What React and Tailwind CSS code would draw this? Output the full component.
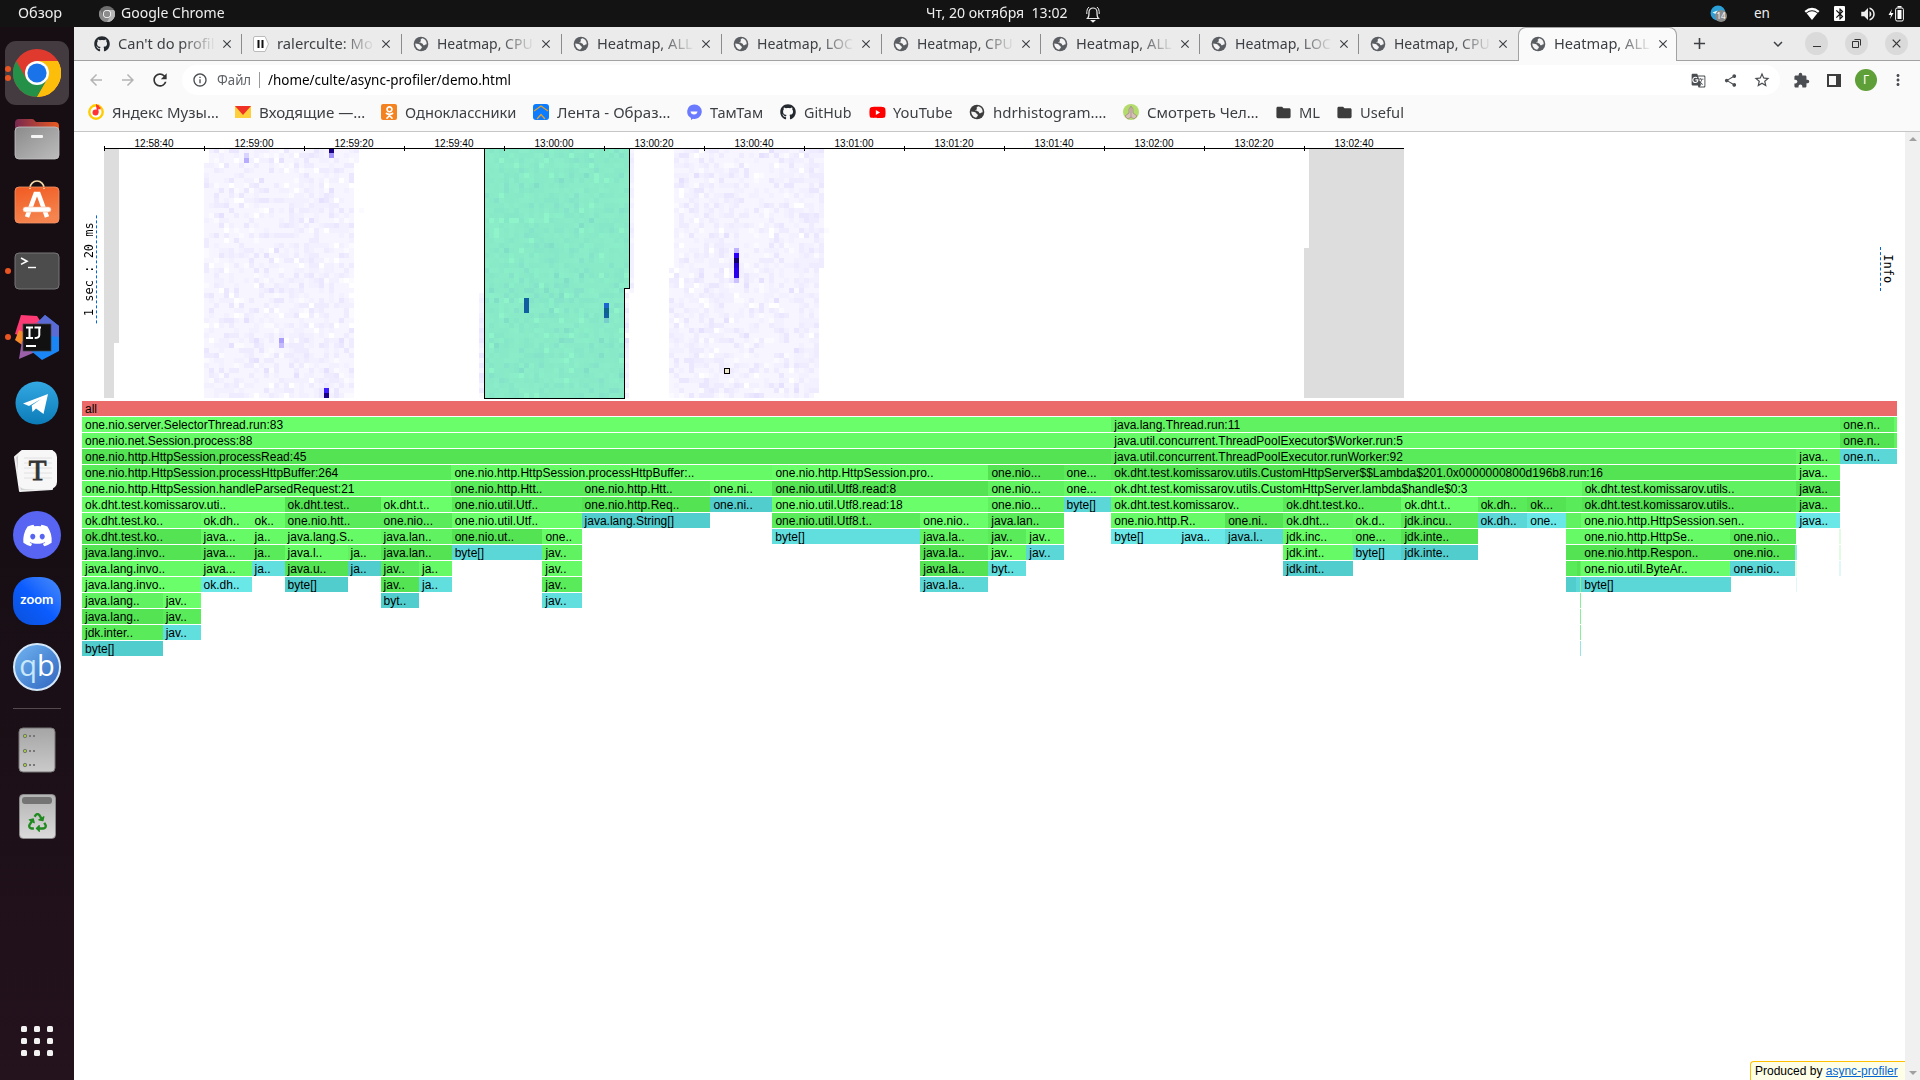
import { FaGithub, FaDiscord, FaYoutube, FaOdnoklassniki, FaRecycle } from "react-icons/fa";
import {
  MdClose, MdArrowBack, MdArrowForward, MdRefresh, MdInfoOutline, MdGTranslate, MdShare, MdStarBorder,
  MdExtension, MdMoreVert, MdFolder, MdAdd, MdKeyboardArrowDown, MdBluetooth, MdVolumeUp,
} from "react-icons/md";

const UBU = "font-['Noto_Sans','DejaVu_Sans',sans-serif]";

/* Text stretched horizontally to a given pixel width. */
function Fit({ w, children, className = "" }) {
  const ref = (el) => {
    if (!el) return;
    const fit = () => {
      el.style.transform = "none";
      const n = el.offsetWidth;
      if (n) el.style.transform = `scaleX(${w / n})`;
    };
    fit();
    if (document.fonts) document.fonts.ready.then(fit);
  };
  return (
    <span className={`block shrink-0 whitespace-pre ${className}`} style={{ width: w }}>
      <span ref={ref} className="inline-block origin-left">{children}</span>
    </span>
  );
}

function Globe({ color }) {
  return (
    <svg width="16" height="16" viewBox="0 0 16 16" className="shrink-0">
      <circle cx="8" cy="8" r="7.300" fill={color} />
      <path d="M9.300 2.300C8 2.700 7.300 3.600 7.800 4.600 8.500 5.800 6.800 5.600 6.500 6.500 6.300 7.200 8.800 7 9.600 7.700 10.400 8.500 9.800 9.300 10.800 9.300 12 9.300 12 8.200 13.700 8.200 13.800 5.200 12 3 9.300 2.300Z" fill="#f4f4f4" />
      <path d="M2.300 7.500C2.200 10.600 4.300 13.300 7.300 13.700 7.400 12.600 8.900 12.300 8.900 11.200 8.900 10.100 7.600 10.400 7.300 9.300 7 8.100 4.300 7.600 2.300 7.500Z" fill="#f4f4f4" />
    </svg>
  );
}

function ChromeLogo({ size, gray }) {
  const c = gray ? ["#6f6f6f", "#b5b5b5", "#8a8a8a", "#8c8c8c"] : ["#e03a2f", "#fdbd0b", "#249048", "#1a73e8"];
  return (
    <svg width={size} height={size} viewBox="0 0 48 48">
      <circle cx="24" cy="24" r="24" fill={c[0]} />
      <path d="M24 12H44.8A24 24 0 0 1 24 48L34.4 30Z" fill={c[1]} />
      <path d="M3.2 12A24 24 0 0 0 24 48L34.4 30H24L13.6 30Z" fill={c[2]} />
      <path d="M34.4 30L24 48A24 24 0 0 0 44.8 12H24Z" fill={c[1]} />
      <circle cx="24" cy="24" r="12" fill="#fff" />
      <circle cx="24" cy="24" r="9.6" fill={c[3]} />
    </svg>
  );
}

function TopBar() {
  return (
    <header className={`flex h-[27px] items-center bg-[#131313] text-[13.5px] text-[#eeeeee] ${UBU}`}>
      <Fit w={44} className="ml-[18px]">Обзор</Fit>
      <div className="ml-[37px] mr-[6px]"><ChromeLogo size={16} gray /></div>
      <Fit w={104}>Google Chrome</Fit>
      <Fit w={142} className="ml-[701px]">Чт, 20 октября  13:02</Fit>
      <svg className="ml-[17px]" width="16" height="18" viewBox="0 0 16 18" fill="none" stroke="#eee" strokeWidth="1.2">
        <path d="M2.5 13.5C4.2 12 4 9.5 4 7a4 4 0 0 1 8 0c0 2.500-.2 5 1.500 6.500Z" />
        <path d="M6.500 15.500h3L8 17Z" fill="#eee" />
        <path d="M1.800 9V6.500Q2 3.500 4 2M14.200 9V6.500Q14 3.500 12 2" strokeWidth="1" />
      </svg>
      <svg className="ml-[609px]" width="18" height="18" viewBox="0 0 18 18">
        <circle cx="8" cy="8" r="7.500" fill="#2a9fd8" />
        <path d="M2.500 7.500l5-2-1 4Z" fill="#dff" />
        <circle cx="11" cy="11" r="6" fill="#8a8a8a" />
        <text x="11" y="14" fontSize="8" fill="#fff" textAnchor="middle" fontFamily="Noto Sans">14</text>
      </svg>
      <Fit w={16} className="ml-[26px]">en</Fit>
      <svg className="ml-[34px]" width="16" height="14" viewBox="0 0 16 14">
        <path d="M.5 4Q8-2.500 15.500 4L14 5.700Q8 1 2 5.700Z" fill="#fff" />
        <path d="M2.600 6.200Q8 2.200 13.400 6.200L8 13Z" fill="#fff" />
      </svg>
      <div className="ml-[14px] flex h-[15px] w-[11px] items-center justify-center rounded-[1px] bg-white text-[#131313]">
        <MdBluetooth size={14} className="shrink-0" />
      </div>
      <MdVolumeUp size={18} className="ml-[14px]" />
      <svg className="ml-[11px]" width="17" height="16" viewBox="0 0 17 16">
        <path d="M4 3L.5 9H3L2 13 5.500 7H3Z" fill="#fff" />
        <rect x="7.600" y="2" width="7.800" height="13" rx="1.500" fill="none" stroke="#fff" />
        <rect x="9.500" y="4" width="4" height="9" fill="#fff" />
        <rect x="9.500" y="0" width="4" height="1.500" fill="#fff" />
      </svg>
    </header>
  );
}

function DockItem({ children, h, dots = 0 }) {
  return (
    <div className="flex w-[74px] shrink-0 items-center" style={{ height: h }}>
      <div className="flex w-[11px] flex-col items-end gap-[3px]">
        {Array.from({ length: dots }, (_, i) => <i key={i} className="block size-[6px] rounded-full bg-[#e95420]" />)}
      </div>
      <div className="flex w-[52px] items-center justify-center">{children}</div>
    </div>
  );
}

function Dock() {
  return (
    <aside className="flex w-[74px] shrink-0 flex-col bg-linear-to-b from-[#170e14] from-50% to-[#24121d]">
      <div className="mt-[14px] ml-[5px] flex h-[64px] w-[64px] shrink-0 items-center rounded-[11px] bg-[#443b41]">
        <div className="flex w-[6px] flex-col items-end gap-[3px]">
          <i className="block size-[6px] rounded-full bg-[#e95420]" />
          <i className="block size-[6px] rounded-full bg-[#e95420]" />
        </div>
        <div className="ml-[2px]"><ChromeLogo size={48} /></div>
      </div>
      <DockItem h={68}>
        <svg width="46" height="42" viewBox="0 0 46 42">
          <defs>
            <linearGradient id="fo"><stop offset="0" stopColor="#77284f" /><stop offset="1" stopColor="#e95a20" /></linearGradient>
            <linearGradient id="fg" x2="1" y2="1"><stop offset="0" stopColor="#8b8b8b" /><stop offset="1" stopColor="#bcbcbc" /></linearGradient>
          </defs>
          <path d="M1 5q0-4 4-4h13q2 0 3 2l1 1h19q4 0 4 4v12H1Z" fill="url(#fo)" />
          <rect x="1" y="9" width="44" height="32" rx="4" fill="url(#fg)" stroke="#c5c5c5" strokeWidth=".8" />
          <rect x="17" y="17" width="12" height="3" rx="1" fill="#f5f5f5" />
        </svg>
      </DockItem>
      <DockItem h={58}>
        <svg width="46" height="44" viewBox="0 0 46 44">
          <defs><linearGradient id="st" x2=".3" y2="1"><stop offset="0" stopColor="#f15a22" /><stop offset="1" stopColor="#f5844e" /></linearGradient></defs>
          <path d="M16 10V8a7 7 0 0 1 14 0v2" fill="none" stroke="#f5d9a8" strokeWidth="1.700" />
          <rect x="1" y="7" width="44" height="36" rx="4" fill="url(#st)" stroke="#f49468" strokeWidth=".8" />
          <path d="M13 37L21.500 14h3L33 37" fill="none" stroke="#fff" strokeWidth="4.500" />
          <rect x="9" y="27" width="28" height="5" rx="2.500" fill="#fff" stroke="#f7b08c" strokeWidth=".6" />
          <path d="M16 9V8M30 9V8" stroke="#f5d9a8" strokeWidth="1.700" />
        </svg>
      </DockItem>
      <DockItem h={80} dots={1}>
        <svg width="46" height="38" viewBox="0 0 46 38">
          <rect x="1" y="1" width="44" height="36" rx="4" fill="#4c4c4c" stroke="#777" />
          <path d="M7 6l6 3.200-6 3.200" fill="none" stroke="#fff" strokeWidth="1.600" />
          <path d="M14 15.500h8" stroke="#fff" strokeWidth="1.400" />
        </svg>
      </DockItem>
      <DockItem h={52} dots={1}>
        <svg width="46" height="46" viewBox="0 0 46 46">
          <path d="M7 1l16 1 6 9-12 14L1 20Z" fill="#fd3a73" />
          <path d="M5 16l13 6-4 13L1 26Z" fill="#f68b2c" />
          <path d="M8 27l18 9-21 9Z" fill="#9a5fa8" />
          <path d="M31 1l14 11v25L28 46 17 37l2-24Z" fill="#1a86f5" />
          <path d="M31 1l14 11v11L20 20l-1-7Z" fill="#5b6bd6" />
          <path d="M20 8l10 3v8H16Z" fill="#e0417f" />
          <rect x="9" y="10" width="28" height="27" fill="#111" stroke="#444" strokeWidth=".7" />
          <path d="M12 13.500h7M12 24h7M15.500 13.500V24M20.500 13.500h6.500M25.300 13.500V21q0 3-4.600 3" fill="none" stroke="#fff" strokeWidth="2" />
          <rect x="12" y="31" width="10" height="2" fill="#fff" />
        </svg>
      </DockItem>
      <DockItem h={80}>
        <svg width="44" height="44" viewBox="0 0 44 44">
          <defs><linearGradient id="tg" x2="0" y2="1"><stop offset="0" stopColor="#33a8e2" /><stop offset="1" stopColor="#0c7cb8" /></linearGradient></defs>
          <circle cx="22" cy="22" r="21.500" fill="url(#tg)" />
          <path d="M8 22.500L33 13l-4.500 20-7.500-5.500-3.500 3.500-.8-6.500L26 18 14 25Z" fill="#fff" />
        </svg>
      </DockItem>
      <DockItem h={54}>
        <svg width="44" height="43" viewBox="0 0 44 43" className="-translate-x-px">
          <path d="M1 8L8 2h30v38L6 42Z" fill="#cfcfcf" stroke="#eee" strokeLinejoin="round" strokeWidth="2" />
          <rect x="4" y="1" width="39" height="39" rx="7" fill="#f7f7f7" />
          <path d="M10 9h28M10 14h28M10 19h28M10 24h28M10 29h28" stroke="#e0e0e0" />
          <text x="23.500" y="31" fontSize="29" textAnchor="middle" fontFamily="Liberation Serif" fill="#333" stroke="#333" strokeWidth=".9">T</text>
        </svg>
      </DockItem>
      <DockItem h={76}>
        <div className="flex size-[48px] items-center justify-center rounded-full bg-[#5765f2] text-white"><FaDiscord size={31} /></div>
      </DockItem>
      <DockItem h={56}>
        <div className="flex size-[48px] items-center justify-center rounded-[20px] bg-linear-to-tr from-[#0b50d8] via-[#0b5cff] to-[#4a8cf8] font-['Lato',sans-serif] text-[13px] font-bold text-white">
          <span className="inline-block -translate-y-px scale-x-[1.04]">zoom</span>
        </div>
      </DockItem>
      <DockItem h={76}>
        <div className="flex size-[48px] items-center justify-center rounded-full border-2 border-[#d5e8fa] bg-linear-to-br from-[#72b4f0] to-[#3066c0] font-['Open_Sans',sans-serif] text-[29px] leading-none">
          <span className="-mt-[5px] text-[#c8e8fa]">q</span><span className="-mt-[5px] text-white">b</span>
        </div>
      </DockItem>
      <div className="mt-[3px] ml-[13px] h-px w-[48px] shrink-0 bg-[#544b50]" />
      <div className="h-[8px] shrink-0" />
      <DockItem h={66}>
        <svg width="38" height="46" viewBox="0 0 38 46">
          <defs><linearGradient id="dk" x2="0" y2="1"><stop offset="0" stopColor="#a5a5a5" /><stop offset="1" stopColor="#cacaca" /></linearGradient></defs>
          <rect x="1" y="1" width="36" height="44" rx="4" fill="url(#dk)" stroke="#777" />
          {[9, 24, 38].map((y) => (
            <g key={y}>
              <circle cx="7" cy={y} r="1.700" fill="#a0c84a" stroke="#666" strokeWidth=".8" />
              <rect x="11" y={y - 1} width="2" height="2" fill="#777" /><rect x="15" y={y - 1} width="2" height="2" fill="#777" />
            </g>
          ))}
        </svg>
      </DockItem>
      <DockItem h={66}>
        <div className="flex h-[45px] w-[37px] flex-col items-center rounded-[4px] border border-[#888] bg-linear-to-b from-[#b4b4b4] to-[#dadada] pt-[2px] text-[#208a20]">
          <div className="mb-[9px] h-[7px] w-[30px] rounded-[3px] bg-[#747474]" />
          <FaRecycle size={19} />
        </div>
      </DockItem>
      <div className="grow" />
      <div className="mb-[24px] ml-[21px] grid w-[33px] grid-cols-3 gap-x-[6px] gap-y-[6px]">
        {Array.from({ length: 9 }, (_, i) => <i key={i} className="block size-[6px] rounded-[1.5px] bg-[#f2f2f2]" />)}
      </div>
    </aside>
  );
}

const TABS = [
  ["Can't do profil", "gh", 159], ["ralerculte: Mo", "mp", 160], ["Heatmap, CPU", "g", 160], ["Heatmap, ALL", "g", 160], ["Heatmap, LOC", "g", 160],
  ["Heatmap, CPU", "g", 159], ["Heatmap, ALL", "g", 159], ["Heatmap, LOC", "g", 159], ["Heatmap, CPU", "g", 159], ["Heatmap, ALL", "g", 159],
];

function Tab({ title, icon, w, last, beforeLast }) {
  return (
    <div
      className={`flex shrink-0 items-center ${last ? "h-[34px] rounded-t-[8px] border border-b-0 border-[#a2a2a2] bg-[#fafafa] pb-[2px]" : "h-[33px]"}`}
      style={{ width: w }}
    >
      <div className={`flex w-[16px] justify-center text-[#5a5e63] ${last ? "ml-[11px]" : "ml-[11px]"}`}>
        {icon === "gh" && <FaGithub size={16} color="#24292f" />}
        {icon === "g" && <Globe color="#5a5e63" />}
        {icon === "mp" && (
          <svg width="16" height="16" viewBox="0 0 16 16">
            <path d="M2 .5h10l3.500 7.500-3.500 7.500H2Q.5 15.500.5 14V2Q.5.500 2 .5Z" fill="#fff" stroke="#bbb" />
            <path d="M5.500 4v8M9.500 4v8" stroke="#111" strokeWidth="2" />
          </svg>
        )}
      </div>
      <div className="ml-[8px] w-[98px] shrink-0 text-[14px] whitespace-nowrap text-[#3c3f43] mask-r-from-64% mask-r-to-100%">
        <Fit w={96}>{title}</Fit>
      </div>
      <MdClose size={14} className="ml-[4px] shrink-0 text-[#3c3f43]" />
      <div className="grow" />
      {!last && !beforeLast && <div className="h-[20px] w-px bg-[#8c8c8c]" />}
    </div>
  );
}

function TabStrip() {
  return (
    <div className="flex h-[34px] items-start border-b border-[#a2a2a2] bg-[#ebebeb] pl-[9px]">
      {TABS.map(([t, i, w], k) => <Tab key={k} title={t} icon={i} w={w} last={k === 9} beforeLast={k === 8} />)}
      <div className="flex h-[33px] grow items-center text-[#3c3f43]">
        <MdAdd size={19} className="ml-[13px]" />
        <MdKeyboardArrowDown size={18} className="ml-[60px]" />
        <div className="ml-[18px] flex size-[23px] items-end justify-center rounded-full bg-[#dadada] pb-[8px]"><i className="block h-px w-[8px] bg-[#333]" /></div>
        <div className="ml-[17px] flex size-[23px] items-center justify-center rounded-full bg-[#dadada]">
          <svg width="9" height="9" viewBox="0 0 9 9" fill="none" stroke="#333"><path d="M.5 2.500h6v6h-6ZM2.500.5h6v6" /></svg>
        </div>
        <div className="ml-[17px] flex size-[23px] items-center justify-center rounded-full bg-[#dadada]">
          <svg width="9" height="9" viewBox="0 0 9 9" fill="none" stroke="#333" strokeWidth="1.200"><path d="M.7.700l7.600 7.600M8.300.7L.7 8.300" /></svg>
        </div>
      </div>
    </div>
  );
}

function Toolbar() {
  return (
    <div className="flex h-[38px] items-center bg-[#fafafa] text-[14px] text-[#4a4d51]">
      <MdArrowBack size={18} className="ml-[13px] text-[#b4b4b4]" />
      <MdArrowForward size={18} className="ml-[14px] text-[#b4b4b4]" />
      <MdRefresh size={20} className="ml-[13px] text-[#333]" />
      <div className="ml-[12px] flex h-[30px] w-[1598px] items-center rounded-full bg-white pl-[10px]">
        <MdInfoOutline size={16} />
        <Fit w={34} className="ml-[9px] -translate-y-px text-[#5f6368]">Файл</Fit>
        <div className="mx-[8px] h-[16px] w-px bg-[#9a9a9a]" />
        <Fit w={243} className="-translate-y-px text-black">/home/culte/async-profiler/demo.html</Fit>
        <div className="grow" />
        <MdGTranslate size={15} />
        <MdShare size={15} className="ml-[17px]" />
        <MdStarBorder size={18} className="ml-[15px] mr-[9px]" />
      </div>
      <MdExtension size={17} className="ml-[13px]" />
      <div className="ml-[17px] h-[13px] w-[14px] border-2 border-r-[5px] border-[#3d3d3d]" />
      <div className="ml-[14px] flex size-[22px] items-center justify-center rounded-full bg-[#5f9f37] text-[12px] text-white">Г</div>
      <MdMoreVert size={18} className="ml-[12px]" />
    </div>
  );
}

const MARKS = [
  ["ym", "Яндекс Музы…", 107, 0], ["mail", "Входящие —…", 106, 16], ["ok", "Одноклассники", 111, 16], ["lenta", "Лента - Образ…", 113, 17],
  ["tt", "ТамТам", 53, 16], ["gh", "GitHub", 48, 17], ["yt", "YouTube", 60, 17], ["g", "hdrhistogram.…", 113, 16], ["sm", "Смотреть Чел…", 112, 17],
  ["f", "ML", 21, 16], ["f", "Useful", 44, 16],
];

function MarkIcon({ k }) {
  if (k === "gh") return <FaGithub size={16} color="#24292f" />;
  if (k === "yt") return <FaYoutube size={17} color="#f00" className="shrink-0" />;
  if (k === "g") return <Globe color="#3c3c3c" />;
  if (k === "f") return <MdFolder size={17} color="#3c3c3c" className="shrink-0" />;
  if (k === "ok")
    return <div className="flex size-[16px] items-center justify-center rounded-[2px] bg-[#f58220]"><FaOdnoklassniki size={13} color="#fff" /></div>;
  return (
    <svg width="16" height="16" viewBox="0 0 16 16">
      {k === "ym" && (<>
        <circle cx="8" cy="8" r="6.700" fill="#fff" stroke="#fc0" strokeWidth="2.400" />
        <path d="M8 1.500Q8 5 12.500 5.500V3.500L8 0Z" fill="#ff3b30" /><circle cx="7.500" cy="8.500" r="3" fill="#f33" />
        <path d="M9.500 8.500V1" stroke="#f33" strokeWidth="2" />
      </>)}
      {k === "mail" && (<><path d="M0 2h16v12H0Z" fill="#fdd03b" /><path d="M0 2h16L8 11Z" fill="#f03226" /></>)}
      {k === "lenta" && (<>
        <rect width="16" height="16" rx="3" fill="#0a7cff" />
        <path d="M1 7l7-5 7 5M4 15l4-4.500 4 4.500" fill="none" stroke="#e0a030" strokeWidth="1.300" />
      </>)}
      {k === "tt" && (<>
        <path d="M8 .5a7.200 7.200 0 1 1-1 14.200L5 16v-2A7.200 7.200 0 0 1 8 .5Z" fill="#6b7bff" />
        <path d="M4.500 7.500h7Q11 10.500 8 10.500T4.500 7.500Z" fill="#fff" />
      </>)}
      {k === "sm" && (<>
        <circle cx="8" cy="8" r="8" fill="#b4dc6c" />
        <path d="M8 2l2 3v4l4 3-3 3-3-2-3 2-3-3 4-3V5Z" fill="#d8c0b8" stroke="#907a80" strokeWidth=".6" />
        <path d="M8 3v10" stroke="#907a80" strokeWidth=".6" />
      </>)}
    </svg>
  );
}

function Bookmarks() {
  return (
    <div className="flex h-[33px] items-center border-b border-[#c6c6c6] bg-[#fafafa] pb-[6px] pl-[14px] text-[14px] text-[#3c3f43]">
      {MARKS.map(([k, t, w, ml], i) => (
        <div key={i} className="flex shrink-0 items-center" style={{ marginLeft: ml }}>
          <div className="mr-[8px] flex w-[16px] justify-center"><MarkIcon k={k} /></div>
          <Fit w={w}>{t}</Fit>
        </div>
      ))}
    </div>
  );
}

/* ---- heatmap ---- */
function rng(seed) {
  let s = seed;
  return () => {
    s = (s * 1664525 + 1013904223) >>> 0;
    return s / 4294967296;
  };
}
const LAV = ["#ffffff", "#fbfaff", "#f7f5ff", "#f7f5ff", "#f7f5ff", "#f3f0ff", "#f3f0ff", "#efecff", "#ebe7ff", "#e6e1ff"];
const GRN = ["#90f4cb", "#8aeec8", "#8aecc8", "#8aebc8", "#89eac8", "#88e9c8", "#88e9c8", "#86e6c8", "#84e3c8", "#80dfc6"];
function shade(r, bias) {
  const v = r();
  const n = v < 0.04 ? 0 : v < 0.1 ? 1 : v > 0.985 ? 9 : v > 0.92 ? 8 : v > 0.83 ? 7 : 2 + Math.floor(r() * 4);
  return Math.min(9, Math.max(0, n + (n > 0 && n < 7 && r() < bias ? 2 : 0)));
}
function cells(seed, startOf, palette, cols, biasOf) {
  const r = rng(seed);
  const out = [];
  for (let row = 0; row < 50; row++)
    for (let c = 0; c < cols(row); c++) out.push([startOf(row) + c * 5, row * 5, palette[shade(r, biasOf(c))]]);
  return out;
}
const CELLS = [
  ...cells(7, (r) => (r < 3 ? 105 : 100), LAV, () => 30, (c) => (c > 16 && c < 26 ? 0.6 : 0.1)),
  ...cells(21, (r) => (r < 29 ? 525 : 520), LAV, () => 1, () => 0.6),
  ...cells(22, (r) => (r < 29 ? 385 : 375), LAV, () => 1, () => 0.6),
  ...cells(33, () => 380, GRN, (r) => (r < 28 ? 29 : 28), () => 0.15),
  ...cells(44, (r) => (r < 24 ? 570 : 565), LAV, () => 30, (c) => (c > 24 ? 0.9 : c < 13 ? 0.45 : 0)),
  [225, 0, "#1a0087"], [225, 5, "#9f92fb"], [140, 5, "#d8d3ff"], [140, 10, "#b6adff"], [175, 190, "#ac9ffb"], [175, 195, "#c4bbff"],
  [220, 240, "#3a1cff"], [220, 245, "#1a0087"], [255, 60, "#fbfaff"], [720, 80, "#fbfaff"],
  [420, 150, "#115fa0"], [420, 155, "#115fa0"], [420, 160, "#115fa0"],
  [500, 155, "#1b66d0"], [500, 160, "#0e6290"], [500, 165, "#115fa0"], [500, 170, "#78cdcd"],
  [630, 100, "#beb4ff"], [630, 105, "#2a00ff"], [630, 110, "#14006e"], [630, 115, "#2000d4"], [630, 120, "#2800ee"], [630, 125, "#2800ee"], [630, 130, "#cac2ff"],
];

function Heatmap() {
  return (
    <div className="flex h-[269px] items-start">
      <div className="mt-[81px] ml-[8px] flex h-[112px] w-[15px] items-center justify-center">
        <span className="inline-block rotate-180 border-l border-dashed border-[#0366d6] font-['DejaVu_Sans_Mono',monospace] text-[12px] leading-[14px] whitespace-pre [writing-mode:vertical-rl]"> 1 sec : 20 ms </span>
      </div>
      <div className="ml-[7px] w-[1300px] font-['Liberation_Sans',Arial,sans-serif]">
        <div className="flex h-[16px] text-[10px] leading-[11px] text-black">
          {["12:58:40", "12:59:00", "12:59:20", "12:59:40", "13:00:00", "13:00:20", "13:00:40", "13:01:00", "13:01:20", "13:01:40", "13:02:00", "13:02:20", "13:02:40"].map((t) => (
            <div key={t} className="w-[100px] pt-[6px] text-center">{t}</div>
          ))}
        </div>
        <svg width="1300" height="253" viewBox="0 0 1300 253" shapeRendering="crispEdges" className="block overflow-visible">
          <path d="M0 0h15v195h-5v55H0Z" fill="#ddd" />
          <path d="M1205 0h95v250h-100V100h5Z" fill="#ddd" />
          {CELLS.map(([x, y, f], i) => <rect key={i} x={x} y={y} width="5" height="5" fill={f} />)}
          <path d="M380.500 .5H525.500V140.500H520.500V250.500H380.500Z" fill="none" stroke="#000" />
          <rect x="620.500" y="220.500" width="5" height="5" fill="#efe6c8" stroke="#000" />
          <rect x="0" y="0" width="1300" height="1" fill="#000" />
          {Array.from({ length: 13 }, (_, i) => <rect key={i} x={i * 100} y="-2" width="1" height="5" fill="#000" />)}
        </svg>
      </div>
      <div className="mt-[113px] ml-[476px] flex h-[48px] w-[15px] items-center">
        <span className="inline-block border-l border-dashed border-[#0366d6] font-['DejaVu_Sans_Mono',monospace] text-[12px] leading-[14px] whitespace-pre [writing-mode:vertical-rl]"> Info </span>
      </div>
    </div>
  );
}

/* ---- flame graph: rows of [end x, fill key, label]; "_" is an empty gap ---- */
const FILL = {
  r: "#eb6a6a", a: "#6aff6a", b: "#66fa66", c: "#60f260", d: "#5aeb5a", e: "#53e353",
  p: "#6ae8e8", q: "#61dede", s: "#5bd7d7", t: "#52cdcd", _: "transparent",
  x: "#88ee98", y: "#e2fae2", z: "#96e4e4", w: "#dff7f7",
};
const ROWS = [
  [[1897, "r", "all"]],
  [[1111.3, "a", "one.nio.server.SelectorThread.run:83"], [1840.3, "c", "java.lang.Thread.run:11"], [1894.500, "d", "one.n.."], [1897, "b"]],
  [[1111.3, "b", "one.nio.net.Session.process:88"], [1840.3, "b", "java.util.concurrent.ThreadPoolExecutor$Worker.run:5"], [1894.500, "e", "one.n.."], [1897, "c"]],
  [[1111.3, "e", "one.nio.http.HttpSession.processRead:45"], [1796.3, "d", "java.util.concurrent.ThreadPoolExecutor.runWorker:92"], [1840.3, "c", "java.."], [1894.500, "s", "one.n.."], [1897, "s"]],
  [[451.4, "d", "one.nio.http.HttpSession.processHttpBuffer:264"], [772.4, "b", "one.nio.http.HttpSession.processHttpBuffer:.."], [988.4, "a", "one.nio.http.HttpSession.pro.."], [1063.6, "e", "one.nio..."], [1111.3, "d", "one..."], [1796.3, "e", "ok.dht.test.komissarov.utils.CustomHttpServer$$Lambda$201.0x0000000800d196b8.run:16"], [1840, "b", "java.."]],
  [[451.4, "b", "one.nio.http.HttpSession.handleParsedRequest:21"], [581.6, "d", "one.nio.http.Htt.."], [710.400, "d", "one.nio.http.Htt.."], [772.4, "b", "one.ni.."], [988.4, "e", "one.nio.util.Utf8.read:8"], [1063.6, "c", "one.nio..."], [1111.3, "b", "one..."], [1581.7, "a", "ok.dht.test.komissarov.utils.CustomHttpServer.lambda$handle$0:3"], [1796.3, "c", "ok.dht.test.komissarov.utils.."], [1840, "e", "java.."]],
  [[284.6, "a", "ok.dht.test.komissarov.uti.."], [380.6, "e", "ok.dht.test.."], [451.7, "a", "ok.dht.t.."], [581.6, "d", "one.nio.util.Utf.."], [710.4, "e", "one.nio.http.Req.."], [772.4, "t", "one.ni.."], [988.4, "a", "one.nio.util.Utf8.read:18"], [1063.6, "c", "one.nio..."], [1111.3, "s", "byte[]"], [1283.4, "b", "ok.dht.test.komissarov.."], [1401.5, "d", "ok.dht.test.ko.."], [1477.7, "a", "ok.dht.t.."], [1527.4, "d", "ok.dh.."], [1565.7, "e", "ok..."], [1581.7, "d"], [1796.3, "e", "ok.dht.test.komissarov.utils.."], [1840, "d", "java.."]],
  [[200.6, "b", "ok.dht.test.ko.."], [251.6, "a", "ok.dh.."], [284.6, "a", "ok.."], [380.6, "d", "one.nio.htt.."], [451.7, "d", "one.nio..."], [581.6, "a", "one.nio.util.Utf.."], [710.4, "t", "java.lang.String[]"], [772.4, "_"], [920.3, "d", "one.nio.util.Utf8.t.."], [988.4, "a", "one.nio.."], [1063.6, "d", "java.lan.."], [1111.3, "_"], [1225.2, "b", "one.nio.http.R.."], [1283.4, "e", "one.ni.."], [1352.6, "c", "ok.dht..."], [1401.5, "b", "ok.d.."], [1477.7, "d", "jdk.incu.."], [1527.4, "s", "ok.dh.."], [1565.7, "p", "one.."], [1581.4, "c"], [1796.6, "a", "one.nio.http.HttpSession.sen.."], [1840, "p", "java.."]],
  [[200.6, "e", "ok.dht.test.ko.."], [251.6, "b", "java..."], [284.6, "b", "ja.."], [380.6, "b", "java.lang.S.."], [451.7, "c", "java.lan.."], [542.4, "e", "one.nio.ut.."], [581.6, "b", "one.."], [772.4, "_"], [920.3, "q", "byte[]"], [988.4, "c", "java.la.."], [1026.4, "d", "jav.."], [1063.6, "b", "jav.."], [1111.3, "_"], [1178.6, "p", "byte[]"], [1225.2, "p", "java.."], [1283.4, "s", "java.l.."], [1352.6, "b", "jdk.inc.."], [1401.5, "c", "one..."], [1477.7, "e", "jdk.inte.."], [1565.7, "_"], [1581.4, "b"], [1730.6, "b", "one.nio.http.HttpSe.."], [1796.6, "d", "one.nio.."], [1839, "_"], [1841, "y"]],
  [[200.6, "e", "java.lang.invo.."], [251.6, "d", "java..."], [284.6, "d", "ja.."], [347.6, "b", "java.l.."], [380.6, "c", "ja.."], [451.7, "e", "java.lan.."], [542.4, "s", "byte[]"], [581.6, "c", "jav.."], [920.3, "_"], [988.4, "e", "java.la.."], [1026.4, "b", "jav.."], [1063.6, "s", "jav.."], [1283.4, "_"], [1352.6, "b", "jdk.int.."], [1401.5, "s", "byte[]"], [1477.7, "t", "jdk.inte.."], [1565.7, "_"], [1581.4, "e"], [1730.6, "e", "one.nio.http.Respon.."], [1795.4, "e", "one.nio.."], [1797, "z"], [1839, "_"], [1841, "y"]],
  [[200.6, "b", "java.lang.invo.."], [251.6, "b", "java..."], [284.6, "q", "ja.."], [347.6, "e", "java.u.."], [380.6, "t", "ja.."], [419, "d", "jav.."], [451.7, "b", "ja.."], [542.4, "_"], [581.6, "b", "jav.."], [920.3, "_"], [988.4, "e", "java.la.."], [1026.4, "q", "byt.."], [1283.4, "_"], [1352.6, "t", "jdk.int.."], [1565.7, "_"], [1577, "d"], [1580.400, "e"], [1581.4, "c"], [1730.6, "a", "one.nio.util.ByteAr.."], [1795.4, "s", "one.nio.."], [1797, "y"], [1839, "_"], [1841, "w"]],
  [[200.6, "a", "java.lang.invo.."], [251.6, "p", "ok.dh.."], [284.6, "_"], [347.6, "t", "byte[]"], [380.6, "_"], [419, "e", "jav.."], [451.7, "q", "ja.."], [542.4, "_"], [581.6, "d", "jav.."], [920.3, "_"], [988.4, "s", "java.la.."], [1565.7, "_"], [1576, "t"], [1580, "s"], [1581.4, "x"], [1730.6, "s", "byte[]"], [1796, "_"], [1797, "w"]],
  [[162.7, "c", "java.lang.."], [200.6, "a", "jav.."], [380.6, "_"], [419, "t", "byt.."], [542.4, "_"], [581.6, "q", "jav.."], [1580, "_"], [1581, "x"]],
  [[162.7, "e", "java.lang.."], [200.6, "d", "jav.."], [1580, "_"], [1581, "x"]],
  [[162.7, "d", "jdk.inter.."], [200.6, "q", "jav.."], [1580, "_"], [1581, "x"]],
  [[162.7, "t", "byte[]"], [1580, "_"], [1581, "z"]],
];

function FlameGraph() {
  return (
    <div className="ml-[8px] flex w-[1815px] flex-col gap-px font-['Liberation_Sans',Arial,sans-serif] text-[12px] leading-[15px] text-black">
      {ROWS.map((row, i) => (
        <div key={i} className="flex h-[15px]">
          {row.map(([end, k, label], j) => (
            <div
              key={j}
              className="h-[15px] shrink-0 whitespace-pre"
              style={{ width: end - (j ? row[j - 1][0] : 82), background: FILL[k] }}
            >
              {label && <span className="relative top-px block pl-[3px]">{label}</span>}
            </div>
          ))}
        </div>
      ))}
    </div>
  );
}

function Page() {
  return (
    <main className="flex h-[948px] bg-white">
      <div className="flex w-[1831px] flex-col">
        <Heatmap />
        <FlameGraph />
        <div className="grow" />
        <div className="ml-auto flex h-[19px] w-[155px] items-center rounded-tl-[4px] border border-r-0 border-b-0 border-[#ffc000] bg-[#ffffe8] pl-[4px] font-['Liberation_Sans',Arial,sans-serif] text-[12px] whitespace-pre text-black">
          Produced by <a className="text-[#0366d6] underline">async-profiler</a>
        </div>
      </div>
      <div className="flex w-[15px] flex-col items-center justify-between bg-[#f0f0f0] py-[5px]">
        <i className="block size-0 border-x-[4px] border-b-[4px] border-x-transparent border-b-[#a0a0a0]" />
        <i className="block size-0 border-x-[4px] border-t-[4px] border-x-transparent border-t-[#a0a0a0]" />
      </div>
    </main>
  );
}

export default function App() {
  return (
    <div className="flex h-[1080px] w-[1920px] flex-col overflow-hidden bg-[#170e14]">
      <TopBar />
      <div className="flex grow">
        <Dock />
        <div className={`flex w-[1846px] flex-col ${UBU}`}>
          <TabStrip />
          <Toolbar />
          <Bookmarks />
          <Page />
        </div>
      </div>
    </div>
  );
}
